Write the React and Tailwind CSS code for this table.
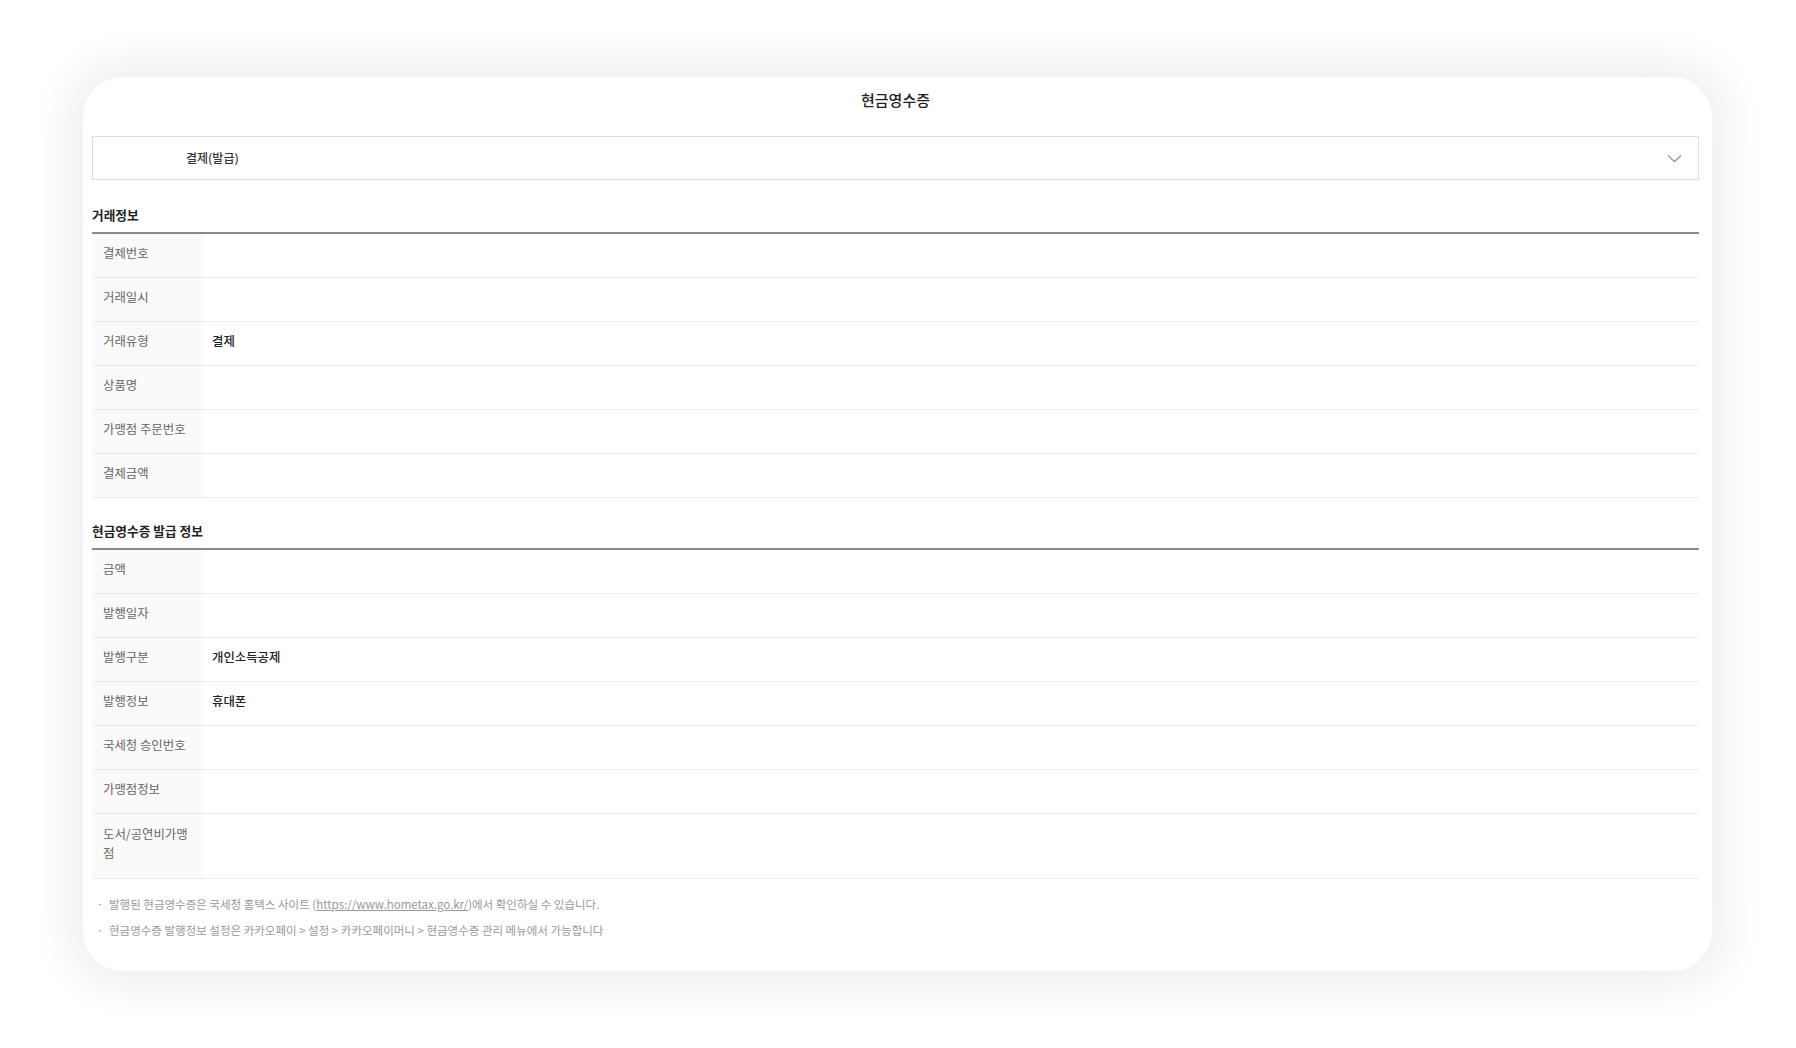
import React from "react";

const font = { fontFamily: '"Noto Sans CJK KR", "Noto Sans", sans-serif' };

function Row({ label, value, tall }) {
  return (
    <div className="flex border-b border-[#ececec]">
      <div className={`w-[111px] shrink-0 bg-[#fafafa] px-[11px] text-[12.4px] text-[#666] ${tall ? "pt-[11px] pb-[15px] leading-[19px]" : "pt-[11px] pb-[15px] leading-[17px]"}`}>
        {label}
      </div>
      <div className="flex-1 px-[9px] pt-[11px] pb-[15px] text-[12.4px] leading-[17px] font-medium text-[#222]">{value}</div>
    </div>
  );
}

function Section({ title, rows, mt }) {
  return (
    <div>
      <div className={`${mt} mb-[8px] text-[12.7px] leading-[18px] font-bold text-[#222]`}>{title}</div>
      <div className="border-t-2 border-[#8a8a8a]">
        {rows.map((r) => (
          <Row key={r[0]} label={r[0]} value={r[1]} tall={r[2]} />
        ))}
      </div>
    </div>
  );
}

export default function App() {
  return (
    <div className="min-h-[1048px] bg-white pt-[77px] pl-[83px]" style={font}>
      <div className="w-[1629px] h-[894px] rounded-[40px] bg-white shadow-[0_0_45px_12px_rgba(0,0,0,0.075)] pl-[9px] pr-[13px]">
        <div className="h-[46px] flex items-center justify-center text-[15px] font-medium text-[#222]">현금영수증</div>
        <div className="mt-[13px] h-[44px] border border-[#dcdcdc] flex items-center justify-between pl-[93px] pr-[16px]">
          <span className="text-[12px] font-medium text-[#333]">결제(발급)</span>
          <svg width="15" height="9" viewBox="0 0 15 9" fill="none">
            <path d="M1 1.5L7.5 7.5L14 1.5" stroke="#9a9a9a" strokeWidth="1.3" />
          </svg>
        </div>
        <Section
          mt="mt-[26px]"
          title="거래정보"
          rows={[
            ["결제번호", ""],
            ["거래일시", ""],
            ["거래유형", "결제"],
            ["상품명", ""],
            ["가맹점 주문번호", ""],
            ["결제금액", ""],
          ]}
        />
        <Section
          mt="mt-[24px]"
          title="현금영수증 발급 정보"
          rows={[
            ["금액", ""],
            ["발행일자", ""],
            ["발행구분", "개인소득공제"],
            ["발행정보", "휴대폰"],
            ["국세청 승인번호", ""],
            ["가맹점정보", ""],
            ["도서/공연비가맹점", "", true],
          ]}
        />
        <ul className="pt-[12px] text-[11.5px] leading-[26px] text-[#999]">
          <li className="flex">
            <span className="w-[17px] pl-[5px]">·</span>
            <span>
              발행된 현금영수증은 국세청 홈텍스 사이트 (<span className="underline">https://www.hometax.go.kr/</span>)에서 확인하실 수 있습니다.
            </span>
          </li>
          <li className="flex">
            <span className="w-[17px] pl-[5px]">·</span>
            <span>현금영수증 발행정보 설정은 카카오페이 &gt; 설정 &gt; 카카오페이머니 &gt; 현금영수증 관리 메뉴에서 가능합니다</span>
          </li>
        </ul>
      </div>
    </div>
  );
}
